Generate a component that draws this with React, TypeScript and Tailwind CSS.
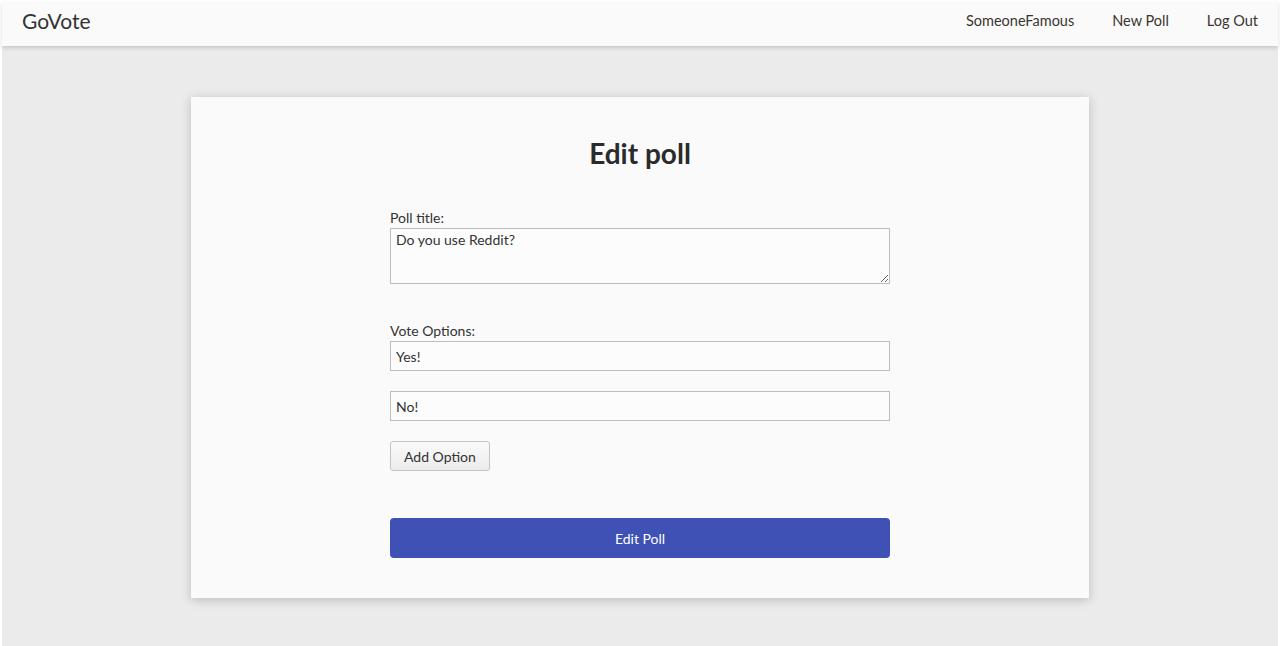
import React, { useState } from 'react';

const App: React.FC = () => {
  const [title, setTitle] = useState('Do you use Reddit?');
  const [options, setOptions] = useState<string[]>(['Yes!', 'No!']);

  return (
    <div className="min-h-screen bg-white p-[2px] pb-0 font-['Lato','Noto_Sans',sans-serif] text-[#333]">
      <div className="min-h-[644px] bg-[#ebebeb] flex flex-col">
        <nav className="h-11 bg-[#fafafa] shadow-[0_2px_4px_rgba(0,0,0,0.15)] flex items-center justify-between px-5 pb-[7px] relative z-10">
          <span className="text-[21px] text-[#333]">GoVote</span>
          <div className="flex items-center gap-[38px] text-[14.5px] text-[#3a3530]">
            <a href="#">SomeoneFamous</a>
            <a href="#">New Poll</a>
            <a href="#">Log Out</a>
          </div>
        </nav>
        <main className="flex justify-center pt-[51px]">
          <div className="w-[898px] h-[501px] bg-[#fafafa] shadow-[0_2px_10px_rgba(0,0,0,0.2)] flex flex-col items-center pt-[38px]">
            <h1 className="text-[28px] font-bold leading-9 text-[#2b2b2b]">Edit poll</h1>
            <form className="w-[500px] mt-[33px] flex flex-col" onSubmit={e => e.preventDefault()}>
              <label className="text-[14px] leading-5 pt-[4px]">Poll title:</label>
              <textarea
                value={title}
                onChange={e => setTitle(e.target.value)}
                className="h-[56px] border border-[#bdbdbd] bg-[#fcfcfc] px-[5px] py-[1px] text-[14px] leading-5 outline-none"
              />
              <label className="text-[14px] leading-5 mt-[37px]">Vote Options:</label>
              {options.map((o, i) => (
                <input
                  key={i}
                  value={o}
                  onChange={e => setOptions(options.map((v, j) => (j === i ? e.target.value : v)))}
                  className={`h-[30px] border border-[#bdbdbd] bg-[#fcfcfc] px-[5px] text-[14px] outline-none ${i > 0 ? 'mt-5' : ''}`}
                />
              ))}
              <button
                type="button"
                onClick={() => setOptions([...options, ''])}
                className="self-start mt-5 h-[30px] px-[13px] border border-[#c4c4c4] rounded-[3px] bg-gradient-to-b from-[#fafafa] to-[#ececec] text-[14px] text-[#333]"
              >
                Add Option
              </button>
              <button
                type="submit"
                className="mt-[47px] h-10 rounded-[4px] bg-[#3f51b5] text-white text-[14px]"
              >
                Edit Poll
              </button>
            </form>
          </div>
        </main>
      </div>
    </div>
  );
};

export default App;
